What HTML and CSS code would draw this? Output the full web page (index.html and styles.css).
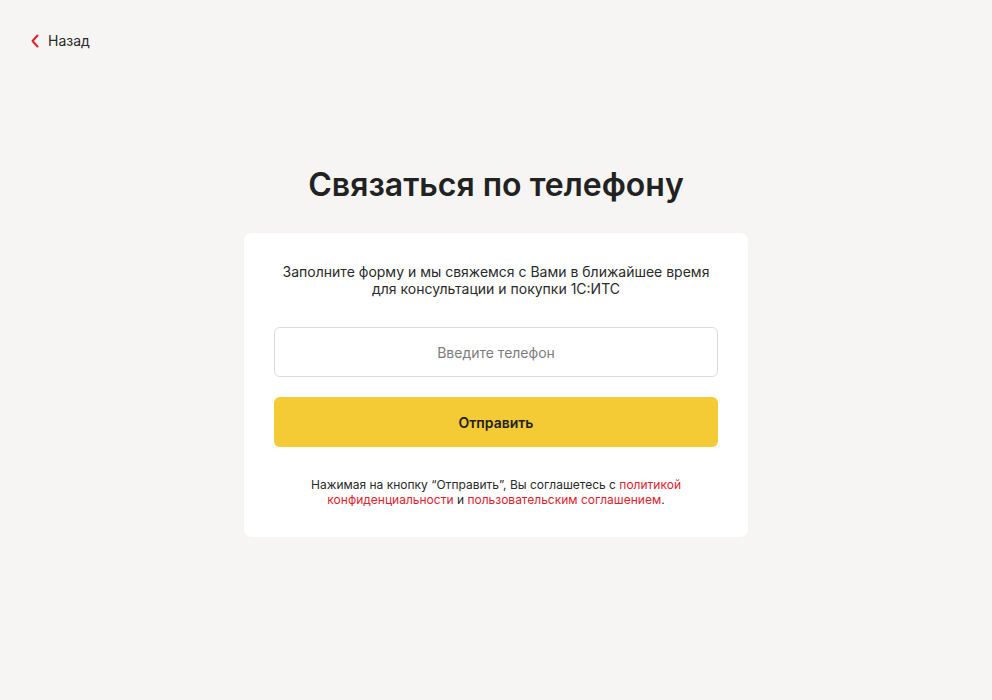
FILE: index.html
```html
<!DOCTYPE html>
<html lang="ru">
<head>
<meta charset="utf-8">
<title>Связаться по телефону</title>
<link rel="stylesheet" href="styles.css">
</head>
<body>
<header class="top">
  <a class="back" href="#">
    <svg class="back-icon" width="10" height="16" viewBox="0 0 10 16" aria-hidden="true"><path d="M7.5 2.5 L2.5 8 L7.5 13.5" fill="none" stroke="#e0212e" stroke-width="2" stroke-linecap="round" stroke-linejoin="round"/></svg>
    <span>Назад</span>
  </a>
</header>
<main class="main">
  <h1 class="title">Связаться по телефону</h1>
  <section class="card">
    <p class="lead">Заполните форму и мы свяжемся с Вами в ближайшее время<br>для консультации и покупки 1С:ИТС</p>
    <form class="form">
      <input class="input" type="tel" placeholder="Введите телефон">
      <button class="btn" type="button">Отправить</button>
    </form>
    <p class="note">Нажимая на кнопку “Отправить”, Вы соглашетесь с <a href="#">политикой<br>конфиденциальности</a> и <a href="#">пользовательским соглашением</a>.</p>
  </section>
</main>
</body>
</html>
```
FILE: styles.css
```css
* { box-sizing: border-box; }
html, body { margin: 0; }
body {
  background: #f6f5f3;
  font-family: Inter, "Noto Sans", sans-serif;
  color: #222;
  min-height: 700px;
}
.top {
  padding: 31px 30px 0;
}
.back {
  display: inline-flex;
  align-items: center;
  gap: 8px;
  text-decoration: none;
  color: #2a2a2a;
  font-size: 14px;
  line-height: 20px;
}
.back-icon { display: block; }
.main {
  display: flex;
  flex-direction: column;
  align-items: center;
  padding-top: 112px;
}
.title {
  margin: 0 0 28px;
  font-size: 32px;
  line-height: 40px;
  font-weight: 600;
  color: #222;
  letter-spacing: 0;
}
.card {
  width: 504px;
  background: #fff;
  border-radius: 8px;
  padding: 30px 30px 30px;
  text-align: center;
}
.lead {
  margin: 0;
  font-size: 14px;
  line-height: 17px;
  color: #2a2a2a;
}
.form {
  display: flex;
  flex-direction: column;
  gap: 20px;
  margin-top: 30px;
}
.input {
  height: 50px;
  width: 100%;
  border: 1px solid #dcdcdc;
  border-radius: 6px;
  background: #fff;
  text-align: center;
  font-family: inherit;
  font-size: 14px;
  color: #222;
  outline: none;
}
.input::placeholder { color: #7d7d7d; }
.btn {
  height: 50px;
  width: 100%;
  border: 0;
  border-radius: 6px;
  background: #f4ca35;
  font-family: inherit;
  font-size: 14px;
  font-weight: 600;
  color: #222;
  cursor: pointer;
}
.note {
  margin: 30px 0 0;
  font-size: 12px;
  line-height: 15px;
  color: #2a2a2a;
}
.note a {
  color: #e0212e;
  text-decoration: none;
}
```
